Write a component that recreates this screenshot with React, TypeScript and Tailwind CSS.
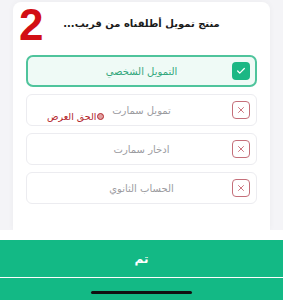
import { Check, X } from "lucide-react"

const items = [
  { label: "التمويل الشخصي", active: true },
  { label: "تمويل سمارت", active: false, badge: true },
  { label: "ادخار سمارت", active: false },
  { label: "الحساب الثانوي", active: false },
]

function Item({ label, active, badge }: { label: string; active: boolean; badge?: boolean }) {
  return (
    <div
      dir="rtl"
      className={
        active
          ? "relative grid h-[32px] grid-cols-[18px_1fr_18px] items-center rounded-[7px] border-2 border-[#4fc49c] bg-[#effaf6] px-[5px]"
          : "relative grid h-[32px] grid-cols-[18px_1fr_18px] items-center rounded-[6px] border border-[#ececf0] bg-white px-[6px]"
      }
    >
      {active ? (
        <div className="flex h-[18px] w-[18px] items-center justify-center rounded-[4px] bg-[#1cb784]">
          <Check size={10} strokeWidth={3} className="text-white" />
        </div>
      ) : (
        <div className="flex h-[18px] w-[18px] items-center justify-center rounded-[4px] border-[1.5px] border-[#c56f7a] bg-white">
          <X size={10} strokeWidth={2} className="text-[#c25a66]" />
        </div>
      )}
      <span
        className={
          active
            ? "text-center text-[10px] text-[#33a77c]"
            : "text-center text-[10px] text-[#9b9b9f]"
        }
      >
        {label}
      </span>
      <span />
      {badge && (
        <span className="absolute bottom-[4px] left-[20px] flex items-center gap-[1px] text-[9.5px] leading-none text-[#b3262c]">
          <span className="h-[7px] w-[7px] rounded-full border-[1.5px] border-[#b3262c] bg-[#e0a0a0]" />
          الحق العرض
        </span>
      )}
    </div>
  )
}

export default function App() {
  return (
    <div
      className="relative flex h-[300px] w-full flex-col overflow-hidden bg-[#f4f4f7]"
      style={{ fontFamily: '"DejaVu Sans", "Noto Sans", sans-serif' }}
    >
      <div className="mx-[13px] mt-[2px] flex h-[228px] flex-col rounded-t-[8px] bg-white px-[13px] shadow-[0_0_6px_rgba(0,0,0,0.04)]">
        <h1 dir="rtl" className="pt-[14px] text-center text-[10px] font-bold leading-[16px] text-[#1a1a1a]">
          منتج تمويل أطلقناه من قريب...
        </h1>
        <div className="mt-[23px] flex flex-col gap-[7px]">
          {items.map((it) => (
            <Item key={it.label} {...it} />
          ))}
        </div>
      </div>
      <div className="h-[10px] bg-white" />
      <button className="flex h-[37px] items-center justify-center bg-[#13b985] text-[12px] font-bold text-white">
        تم
      </button>
      <div className="h-px bg-white/80" />
      <div className="flex flex-1 items-end justify-center bg-[#13b985] pb-[6px]">
        <div className="h-[3px] w-[101px] rounded-full bg-[#111]" />
      </div>
      <span
        className="absolute left-[19px] top-[3px] text-[44px] font-black leading-none text-[#d20f14]"
        style={{ fontFamily: '"Liberation Sans", Arial, sans-serif' }}
      >
        2
      </span>
    </div>
  )
}
